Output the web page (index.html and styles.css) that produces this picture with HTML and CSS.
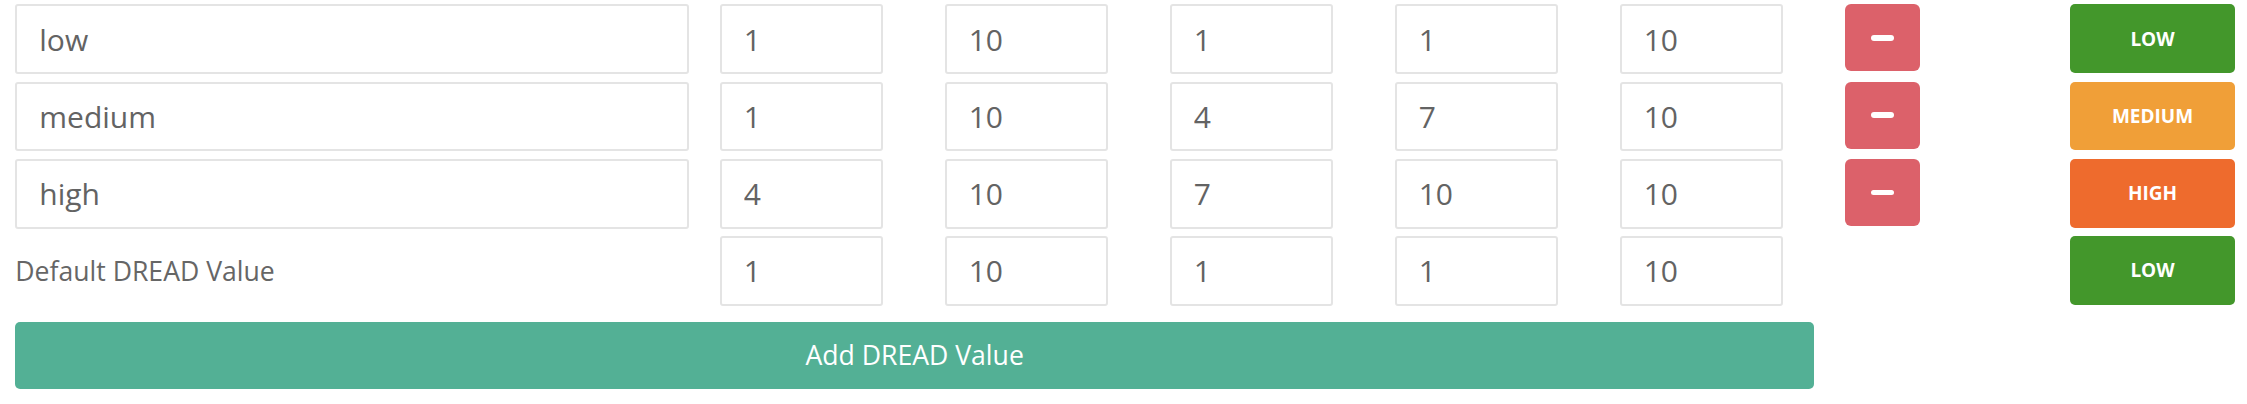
FILE: index.html
```html
<!DOCTYPE html>
<html>
<head>
<meta charset="utf-8">
<link rel="stylesheet" href="styles.css">
</head>
<body>
<div class="panel">
  <div class="grid">
    <div class="cell first"><input class="field" type="text" value="low"></div>
    <div class="cell"><input class="field" type="text" value="1"></div>
    <div class="cell"><input class="field" type="text" value="10"></div>
    <div class="cell"><input class="field" type="text" value="1"></div>
    <div class="cell"><input class="field" type="text" value="1"></div>
    <div class="cell"><input class="field" type="text" value="10"></div>
    <div class="cell"><button class="remove" type="button"><span class="minus"></span></button></div>
    <div class="cell last"><span class="badge low">LOW</span></div>

    <div class="cell first"><input class="field" type="text" value="medium"></div>
    <div class="cell"><input class="field" type="text" value="1"></div>
    <div class="cell"><input class="field" type="text" value="10"></div>
    <div class="cell"><input class="field" type="text" value="4"></div>
    <div class="cell"><input class="field" type="text" value="7"></div>
    <div class="cell"><input class="field" type="text" value="10"></div>
    <div class="cell"><button class="remove" type="button"><span class="minus"></span></button></div>
    <div class="cell last"><span class="badge medium">MEDIUM</span></div>

    <div class="cell first"><input class="field" type="text" value="high"></div>
    <div class="cell"><input class="field" type="text" value="4"></div>
    <div class="cell"><input class="field" type="text" value="10"></div>
    <div class="cell"><input class="field" type="text" value="7"></div>
    <div class="cell"><input class="field" type="text" value="10"></div>
    <div class="cell"><input class="field" type="text" value="10"></div>
    <div class="cell"><button class="remove" type="button"><span class="minus"></span></button></div>
    <div class="cell last"><span class="badge high">HIGH</span></div>

    <div class="cell first label-cell"><span class="label">Default DREAD Value</span></div>
    <div class="cell"><input class="field" type="text" value="1"></div>
    <div class="cell"><input class="field" type="text" value="10"></div>
    <div class="cell"><input class="field" type="text" value="1"></div>
    <div class="cell"><input class="field" type="text" value="1"></div>
    <div class="cell"><input class="field" type="text" value="10"></div>
    <div class="cell"></div>
    <div class="cell last"><span class="badge low">LOW</span></div>

    <div class="cell add-cell"><button class="add" type="button">Add DREAD Value</button></div>
  </div>
</div>
</body>
</html>
```

FILE: styles.css
```css
html, body {
  margin: 0;
  padding: 0;
  background: #ffffff;
}

body {
  font-family: "Open Sans", "Liberation Sans", sans-serif;
  color: #666666;
  overflow: hidden;
}

.panel {
  padding-top: 4.3px;
}

.grid {
  display: grid;
  grid-template-columns: 704.4px repeat(6, 225px) 196.3px;
  row-gap: 7.6px;
  margin-left: -15.4px;
  align-items: start;
}

.cell {
  padding: 0 30.7px;
  box-sizing: border-box;
  min-width: 0;
}

.cell.first {
  padding-right: 0;
}

.cell.last {
  padding-right: 0;
}

.field {
  display: block;
  width: 100%;
  height: 69.7px;
  box-sizing: border-box;
  border: 2px solid #e4e4e4;
  border-radius: 3px;
  padding: 0 22px;
  margin: 0;
  font-family: "Open Sans", "Liberation Sans", sans-serif;
  font-size: 30px;
  color: #636363;
  background: #ffffff;
  outline: none;
}

.remove {
  display: flex;
  align-items: center;
  justify-content: center;
  width: 75px;
  height: 67px;
  margin: 0;
  padding: 0;
  border: none;
  border-radius: 6px;
  background: #dc616a;
}

.minus {
  display: block;
  width: 23px;
  height: 5.5px;
  border-radius: 3px;
  background: #ffffff;
}

.badge {
  display: flex;
  align-items: center;
  justify-content: center;
  width: 100%;
  height: 68.7px;
  border-radius: 5px;
  color: #ffffff;
  font-size: 19px;
  font-weight: 700;
  box-sizing: border-box;
}

.badge.low {
  background: #43972b;
}

.badge.medium {
  background: #f09f38;
}

.badge.high {
  background: #ee6b2d;
}

.label-cell {
  display: flex;
  align-items: center;
  height: 69.7px;
}

.label {
  font-size: 26.6px;
  color: #666666;
}

.add-cell {
  grid-column: 1 / span 6;
  margin-top: 8.7px;
  padding-right: 0;
}

.add {
  display: block;
  width: 100%;
  height: 66.7px;
  margin: 0;
  border: none;
  border-radius: 5px;
  background: #53b095;
  color: #ffffff;
  font-family: "Open Sans", "Liberation Sans", sans-serif;
  font-size: 26.6px;
  padding: 0;
}
```
